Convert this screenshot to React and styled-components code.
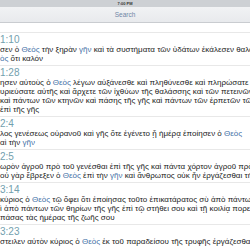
import React from 'react';
import styled, { createGlobalStyle } from 'styled-components';

const GlobalStyle = createGlobalStyle`
  html, body {
    margin: 0;
    padding: 0;
    background: #ffffff;
  }
  body {
    font-family: "Liberation Sans", Arial, sans-serif;
    overflow: hidden;
  }
`;

const Screen = styled.div`
  width: 250px;
  height: 250px;
  overflow: hidden;
  display: flex;
  flex-direction: column;
  background: #fff;
`;

const StatusBar = styled.div`
  height: 7px;
  background: #cdd0d4;
  display: flex;
  align-items: center;
  justify-content: center;
  font-size: 4px;
  font-weight: 700;
  color: #333;
`;

const NavBar = styled.div`
  height: 15px;
  background: linear-gradient(#f1f2f4, #e8eaed);
  border-bottom: 1px solid #c9ccd0;
  display: flex;
  align-items: center;
  justify-content: center;
  font-size: 6.5px;
  color: #6f87a6;
`;

const List = styled.div`
  padding-top: 9px;
`;

const Row = styled.div`
  border-top: 1px solid #e8e8e8;
  padding: 2px 0 2px;
`;

const Ref = styled.div`
  font-size: 10px;
  line-height: 10px;
  color: #72a0ae;
  white-space: nowrap;
`;

const Line = styled.div`
  font-size: 8px;
  line-height: 9px;
  color: #222;
  white-space: nowrap;
  overflow: hidden;
`;

const Hit = styled.span`
  color: #3f6fa6;
`;

const verses = [
  {
    ref: '1:10',
    lines: [
      ['σεν ὁ ', ['Θεὸς'], ' τὴν ξηρὰν ', ['γῆν'], ' καὶ τὰ συστήματα τῶν ὑδάτων ἐκάλεσεν θαλάσσας'],
      [['ὸς'], ' ὅτι καλόν'],
    ],
  },
  {
    ref: '1:28',
    lines: [
      ['ησεν αὐτοὺς ὁ ', ['Θεὸς'], ' λέγων αὐξάνεσθε καὶ πληθύνεσθε καὶ πληρώσατε'],
      ['υριεύσατε αὐτῆς καὶ ἄρχετε τῶν ἰχθύων τῆς θαλάσσης καὶ τῶν πετεινῶν'],
      ['καὶ πάντων τῶν κτηνῶν καὶ πάσης τῆς γῆς καὶ πάντων τῶν ἑρπετῶν τῶν'],
      [' ἐπὶ τῆς γῆς'],
    ],
  },
  {
    ref: '2:4',
    lines: [
      ['λος γενέσεως οὐρανοῦ καὶ γῆς ὅτε ἐγένετο ᾗ ἡμέρᾳ ἐποίησεν ὁ ', ['Θεὸς']],
      ['αὶ τὴν ', ['γῆν']],
    ],
  },
  {
    ref: '2:5',
    lines: [
      ['ωρὸν ἀγροῦ πρὸ τοῦ γενέσθαι ἐπὶ τῆς γῆς καὶ πάντα χόρτον ἀγροῦ πρὸ'],
      ['οὐ γὰρ ἔβρεξεν ὁ ', ['Θεὸς'], ' ἐπὶ τὴν ', ['γῆν'], ' καὶ ἄνθρωπος οὐκ ἦν ἐργάζεσθαι τὴν'],
    ],
  },
  {
    ref: '3:14',
    lines: [
      ['κύριος ὁ ', ['Θεὸς'], ' τῷ ὄφει ὅτι ἐποίησας τοῦτο ἐπικατάρατος σὺ ἀπὸ πάντων'],
      ['ὶ ἀπὸ πάντων τῶν θηρίων τῆς γῆς ἐπὶ τῷ στήθει σου καὶ τῇ κοιλίᾳ πορεύσῃ'],
      [' πάσας τὰς ἡμέρας τῆς ζωῆς σου'],
    ],
  },
  {
    ref: '3:23',
    lines: [
      ['στειλεν αὐτὸν κύριος ὁ ', ['Θεὸς'], ' ἐκ τοῦ παραδείσου τῆς τρυφῆς ἐργάζεσθαι'],
    ],
  },
];

const renderLine = parts =>
  parts.map((part, i) =>
    Array.isArray(part) ? <Hit key={i}>{part[0]}</Hit> : <React.Fragment key={i}>{part}</React.Fragment>
  );

const App = () => (
  <Screen>
    <GlobalStyle />
    <StatusBar>7:00 PM</StatusBar>
    <NavBar>Search</NavBar>
    <List>
      {verses.map(v => (
        <Row key={v.ref}>
          <Ref>{v.ref}</Ref>
          {v.lines.map((l, i) => (
            <Line key={i}>{renderLine(l)}</Line>
          ))}
        </Row>
      ))}
    </List>
  </Screen>
);

export default App;
